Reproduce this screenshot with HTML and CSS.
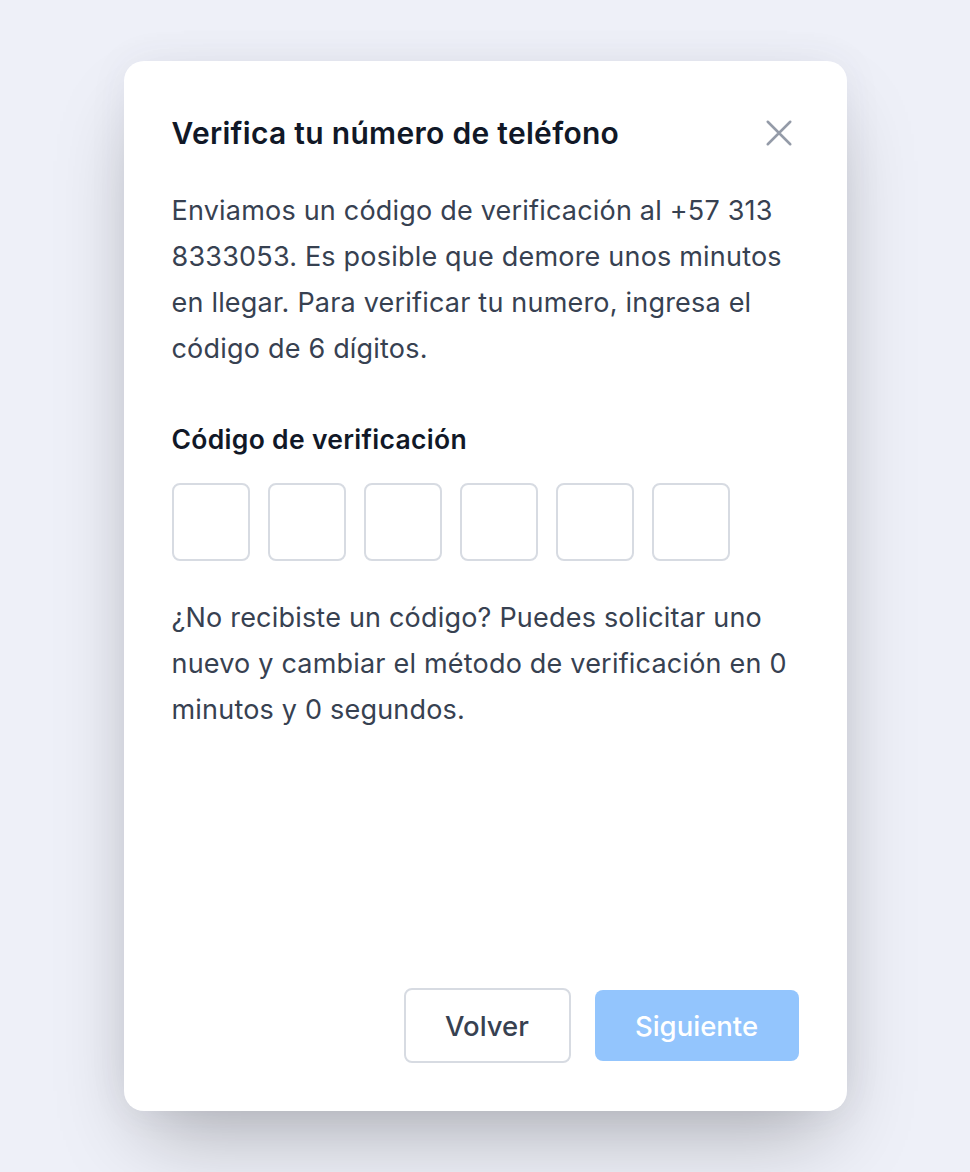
FILE: index.html
```html
<!DOCTYPE html>
<html lang="es">
<head>
<meta charset="utf-8">
<title>Verifica tu número de teléfono</title>
<link rel="stylesheet" href="styles.css">
</head>
<body>
<div class="modal" role="dialog" aria-labelledby="modal-title">
  <div class="modal-header">
    <h2 class="modal-title" id="modal-title">Verifica tu número de teléfono</h2>
    <button class="close-btn" type="button" aria-label="Cerrar">
      <svg viewBox="0 0 24 24" width="36" height="36" fill="none" stroke="currentColor" stroke-width="1.7" stroke-linecap="round">
        <path d="M4.5 4.5L19.5 19.5M19.5 4.5L4.5 19.5"/>
      </svg>
    </button>
  </div>
  <p class="modal-text">Enviamos un código de verificación al +57 313 8333053. Es posible que demore unos minutos en llegar. Para verificar tu numero, ingresa el código de 6 dígitos.</p>
  <label class="code-label">Código de verificación</label>
  <div class="code-inputs">
    <input class="code-box" type="text" maxlength="1" aria-label="Dígito 1">
    <input class="code-box" type="text" maxlength="1" aria-label="Dígito 2">
    <input class="code-box" type="text" maxlength="1" aria-label="Dígito 3">
    <input class="code-box" type="text" maxlength="1" aria-label="Dígito 4">
    <input class="code-box" type="text" maxlength="1" aria-label="Dígito 5">
    <input class="code-box" type="text" maxlength="1" aria-label="Dígito 6">
  </div>
  <p class="modal-text resend-text">¿No recibiste un código? Puedes solicitar uno nuevo y cambiar el método de verificación en 0 minutos y 0 segundos.</p>
  <div class="modal-footer">
    <button class="btn btn-secondary" type="button">Volver</button>
    <button class="btn btn-primary" type="button" disabled>Siguiente</button>
  </div>
</div>
</body>
</html>
```

FILE: styles.css
```css
* {
  box-sizing: border-box;
}

html, body {
  margin: 0;
  padding: 0;
}

body {
  min-height: 1172px;
  background: #eef0f8;
  font-family: Inter, "Noto Sans", "Liberation Sans", sans-serif;
  font-optical-sizing: none;
  font-variation-settings: "opsz" 14;
  display: flex;
  align-items: center;
  justify-content: center;
}

.modal {
  width: 723px;
  height: 1050px;
  background: #ffffff;
  border-radius: 20px;
  padding: 48px;
  display: flex;
  flex-direction: column;
  box-shadow: 0 40px 80px -20px rgba(0, 0, 0, 0.28), 0 0 40px rgba(60, 70, 100, 0.06);
}

.modal-header {
  display: flex;
  align-items: center;
  justify-content: space-between;
  height: 48px;
}

.modal-title {
  margin: 0;
  font-size: 30px;
  line-height: 48px;
  font-weight: 600;
  letter-spacing: 0.3px;
  color: #111827;
}

.close-btn {
  border: none;
  background: none;
  padding: 0;
  margin-right: 2px;
  width: 36px;
  height: 36px;
  color: #949ba8;
  display: flex;
  align-items: center;
  justify-content: center;
  cursor: pointer;
}

.modal-text {
  margin: 31px 0 0;
  font-size: 27px;
  line-height: 46px;
  letter-spacing: 0.2px;
  color: #374151;
}

.code-label {
  display: block;
  margin-top: 49px;
  font-size: 26.5px;
  line-height: 36px;
  font-weight: 600;
  letter-spacing: 0.3px;
  color: #111827;
}

.code-inputs {
  display: flex;
  gap: 18px;
  margin-top: 26px;
}

.code-box {
  width: 78px;
  height: 78px;
  border: 2px solid #d7dbe2;
  border-radius: 8px;
  background: #fff;
  font-family: inherit;
  font-size: 28px;
  text-align: center;
  outline: none;
}

.resend-text {
  margin-top: 34px;
}

.modal-footer {
  margin-top: auto;
  display: flex;
  justify-content: flex-end;
  align-items: center;
  gap: 24px;
}

.btn {
  font-family: inherit;
  font-size: 27.5px;
  font-weight: 500;
  border-radius: 8px;
  cursor: pointer;
}

.btn-secondary {
  width: 167px;
  height: 75px;
  background: #ffffff;
  border: 2px solid #d7dbe2;
  color: #374151;
}

.btn-primary {
  width: 204px;
  height: 71px;
  background: #93c5fd;
  border: none;
  color: #ffffff;
}
```
